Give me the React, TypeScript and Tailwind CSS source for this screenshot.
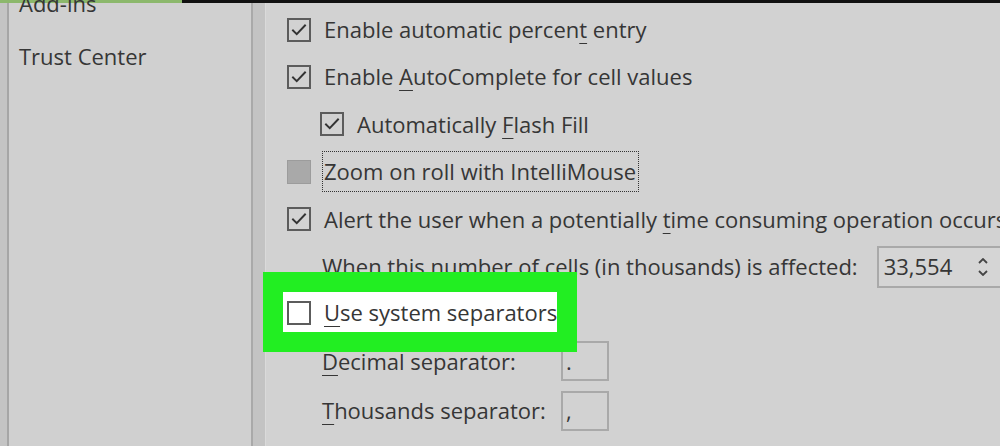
import React from "react";

const font = { fontFamily: '"Open Sans", "Noto Sans", sans-serif' };

function CheckIcon() {
  return (
    <svg viewBox="0 0 24 24" className="w-[18px] h-[18px]" fill="none">
      <path d="M4 12.5l5 5L20 6" stroke="#333" strokeWidth="2.6" strokeLinecap="square" />
    </svg>
  );
}

function Checkbox({ checked, disabled }: { checked?: boolean; disabled?: boolean }) {
  if (disabled) {
    return <div className="w-[24px] h-[24px] shrink-0 bg-[#a9a9a9] border border-[#9c9c9c]" />;
  }
  return (
    <div className="w-[24px] h-[24px] shrink-0 border-2 border-[#5c5c5c] flex items-center justify-center">
      {checked && <CheckIcon />}
    </div>
  );
}

function Key({ children }: { children: React.ReactNode }) {
  return <span className="underline underline-offset-[5px] decoration-1">{children}</span>;
}

export default function App() {
  return (
    <div
      className="w-[1000px] h-[446px] overflow-hidden relative flex flex-col bg-[#d2d2d2] text-[#363636]"
      style={font}
    >
      {/* top strip */}
      <div className="h-[3px] flex shrink-0">
        <div className="w-[182px] bg-[#8cb86c]" />
        <div className="flex-1 bg-[#111]" />
      </div>

      <div className="flex flex-1 min-h-0">
        {/* left rail */}
        <div className="w-[9px] bg-[#c4c4c4] border-r-2 border-[#a6a6a6] shrink-0" />

        {/* sidebar */}
        <div className="w-[242px] bg-[#d0d0d0] shrink-0 pl-[10px] text-[22px] leading-none">
          <div className="-mt-[11px] h-[22px] flex items-end">Add-ins</div>
          <div className="mt-[31px]">Trust Center</div>
        </div>

        {/* divider */}
        <div className="w-[15px] shrink-0 bg-[#c3c3c3] border-l-2 border-[#a9a9a9] border-r border-r-[#dadada]" />

        {/* main options */}
        <div className="flex-1 pl-[21px] pt-[3px] text-[22px] whitespace-nowrap">
          <div className="h-[47px] flex items-center gap-[13px]">
            <Checkbox checked />
            <span>Enable automatic percen<Key>t</Key> entry</span>
          </div>
          <div className="h-[47px] flex items-center gap-[13px]">
            <Checkbox checked />
            <span>Enable <Key>A</Key>utoComplete for cell values</span>
          </div>
          <div className="h-[48px] flex items-center gap-[13px] pl-[33px]">
            <Checkbox checked />
            <span>Automatically <Key>F</Key>lash Fill</span>
          </div>
          <div className="h-[47px] flex items-center gap-[11px]">
            <Checkbox disabled />
            <span className="border border-dotted border-[#333] h-[41px] flex items-center pl-[1px] pr-[2px]">
              Zoom on roll with IntelliMouse
            </span>
          </div>
          <div className="h-[48px] flex items-center gap-[13px]">
            <Checkbox checked />
            <span>Alert the user when a potentially <Key>t</Key>ime consuming operation occurs</span>
          </div>
          <div className="h-[47px] flex items-center pl-[35px] gap-[19px]">
            <span>When this number of cells (in thousands) is affected:</span>
            <div className="h-[42px] w-[140px] shrink-0 border-2 border-[#a9a9a9] bg-[#d5d5d5] flex items-center pl-[5px]">
              <span>33,554</span>
              <div className="ml-[26px] flex flex-col items-center gap-[6px]">
                <svg viewBox="0 0 10 6" className="w-[10px] h-[6px]"><path d="M1 5l4-4 4 4" stroke="#444" strokeWidth="1.8" fill="none" /></svg>
                <svg viewBox="0 0 10 6" className="w-[10px] h-[6px]"><path d="M1 1l4 4 4-4" stroke="#444" strokeWidth="1.8" fill="none" /></svg>
              </div>
            </div>
          </div>
          <div className="h-[45px] flex items-center gap-[13px] relative z-10">
            <Checkbox />
            <span>
              <Key>U</Key>se system separators
            </span>
          </div>
          <div className="h-[52px] flex items-center pl-[35px]">
            <span className="w-[239px]"><Key>D</Key>ecimal separator:</span>
            <div className="w-[48px] h-[40px] border-2 border-[#a9a9a9] pl-[3px] flex items-center">.</div>
          </div>
          <div className="h-[47px] flex items-center pl-[35px]">
            <span className="w-[239px]"><Key>T</Key>housands separator:</span>
            <div className="w-[48px] h-[40px] border-2 border-[#a9a9a9] pl-[3px] flex items-center">,</div>
          </div>
        </div>
      </div>

      {/* green highlight annotation */}
      <div className="absolute left-[263px] top-[272px] w-[314px] h-[80px] border-[20px] border-[#22ee22] bg-white z-0" />
    </div>
  );
}
